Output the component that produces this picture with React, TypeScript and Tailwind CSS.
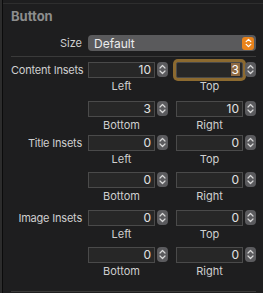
import React from 'react'

const font = { fontFamily: 'Inter, "Noto Sans", sans-serif' }

function Stepper() {
  return (
    <div className="w-[11px] h-[15px] rounded-[4px] bg-[#5b5b5e] flex items-center justify-center shrink-0">
      <svg width="7" height="11" viewBox="0 0 7 11" fill="none" stroke="#d8d8d8" strokeWidth="1.2" strokeLinecap="round" strokeLinejoin="round">
        <path d="M1 4 L3.5 1.5 L6 4" />
        <path d="M1 7 L3.5 9.5 L6 7" />
      </svg>
    </div>
  )
}

function Field({ value, focused }: { value: string; focused?: boolean }) {
  return (
    <div className="flex items-center gap-[2px]">
      <div
        className={
          focused
            ? 'w-[67px] h-[16px] bg-[#272727] border border-[#4a4a4a] rounded-[2px] flex items-center justify-end pr-[2px] shadow-[0_0_0_3px_#8c6a30]'
            : 'w-[67px] h-[16px] bg-[#272727] border border-[#4a4a4a] flex items-center justify-end pr-[3px]'
        }
      >
        {focused ? (
          <span className="text-[12px] leading-[13px] text-white bg-[#8f6a43] px-[1px]">{value}</span>
        ) : (
          <span className="text-[12px] leading-[13px] text-[#e2e2e2]">{value}</span>
        )}
      </div>
      <Stepper />
    </div>
  )
}

function Cell({ value, label, focused }: { value: string; label: string; focused?: boolean }) {
  return (
    <div className="flex flex-col w-[80px]">
      <Field value={value} focused={focused} />
      <div className="w-[67px] text-center text-[11px] leading-[12px] mt-[2px] text-[#cfcfcf]">{label}</div>
    </div>
  )
}

function InsetGroup({
  title,
  values,
  focusTop,
  gap,
}: {
  title: string
  values: [string, string, string, string]
  focusTop?: boolean
  gap: string
}) {
  return (
    <div className="flex flex-col">
      <div className="flex">
        <div className="w-[71px] text-right text-[11px] leading-[16px] text-[#cfcfcf] whitespace-nowrap tracking-[-0.2px]">{title}</div>
        <div className="flex gap-[8px] ml-[6px]">
          <Cell value={values[0]} label="Left" />
          <Cell value={values[1]} label="Top" focused={focusTop} />
        </div>
      </div>
      <div className={'flex ' + gap}>
        <div className="w-[71px]" />
        <div className="flex gap-[8px] ml-[6px]">
          <Cell value={values[2]} label="Bottom" />
          <Cell value={values[3]} label="Right" />
        </div>
      </div>
    </div>
  )
}

export default function App() {
  return (
    <div className="w-[263px] h-[293px] bg-[#1e1e1f] flex overflow-hidden" style={font}>
      <div className="w-[2px] bg-[#2c2c2c]" />
      <div className="w-[1px] bg-[#0b0b0b]" />
      <div className="flex-1 flex flex-col border-t border-[#2e2e2e] mt-[3px] pl-[8px] pr-[7px]">
        <div className="text-[13px] font-bold text-[#8d8d8d] leading-[16px] mt-[4px]">Button</div>

        <div className="flex items-center mt-[11px]">
          <div className="w-[71px] text-right text-[11px] text-[#cfcfcf]">Size</div>
          <div className="ml-[6px] w-[168px] h-[16px] rounded-[4px] bg-[#5a5a5c] flex items-center justify-between pl-[6px] pr-[2px]">
            <span className="text-[12px] leading-[13px] text-[#ececec]">Default</span>
            <div className="w-[12px] h-[13px] rounded-[3px] bg-[#e9831b] flex items-center justify-center">
              <svg width="7" height="10" viewBox="0 0 7 10" fill="none" stroke="#ffffff" strokeWidth="1.3" strokeLinecap="round" strokeLinejoin="round">
                <path d="M1.2 3.6 L3.5 1.4 L5.8 3.6" />
                <path d="M1.2 6.4 L3.5 8.6 L5.8 6.4" />
              </svg>
            </div>
          </div>
        </div>

        <div className="h-px bg-[#3a3a3a] mt-[4px]" />

        <div className="mt-[5px]">
          <InsetGroup title="Content Insets" values={['10', '3', '3', '10']} focusTop gap="mt-[9px]" />
        </div>
        <div className="mt-[4px]">
          <InsetGroup title="Title Insets" values={['0', '0', '0', '0']} gap="mt-[7px]" />
        </div>
        <div className="mt-[8px]">
          <InsetGroup title="Image Insets" values={['0', '0', '0', '0']} gap="mt-[7px]" />
        </div>

        <div className="h-px bg-[#3a3a3a] mt-[auto] mb-[1px]" />
      </div>
    </div>
  )
}
